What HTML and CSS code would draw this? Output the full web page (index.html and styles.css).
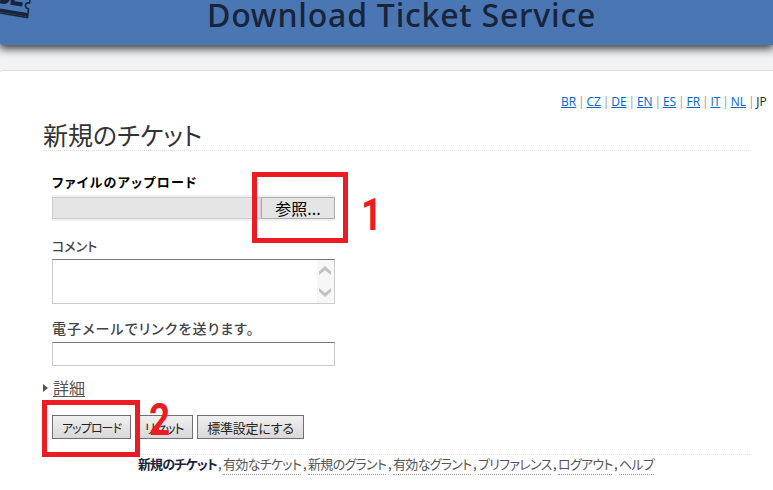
FILE: index.html
```html
<!DOCTYPE html>
<html lang="ja">
<head>
<meta charset="utf-8">
<title>Download Ticket Service</title>
<link rel="stylesheet" href="styles.css">
</head>
<body>
<header class="banner">
  <svg class="logo" width="32" height="20" viewBox="0 0 32 20">
    <g fill="none" stroke="#17243a">
      <path d="M0 13L27.500 17.500L28.500 9Q25 8 25.500 5Q26 2.500 29.500 3L30 0" stroke-width="1.600"/>
      <path d="M0 10.200L27 14.700" stroke-width="3.600"/>
      <path d="M0 1Q6 3.500 8 -1" stroke-width="4"/>
      <path d="M13 -2L12.500 3L22.500 4.500" stroke-width="4"/>
    </g>
  </svg>
  <h1 class="brand">Download Ticket Service</h1>
</header>
<main class="card">
  <nav class="langs"><a>BR</a><i>|</i><a>CZ</a><i>|</i><a>DE</a><i>|</i><a>EN</a><i>|</i><a>ES</a><i>|</i><a>FR</a><i>|</i><a>IT</a><i>|</i><a>NL</a><i>|</i><span>JP</span></nav>
  <h2 class="heading">新規のチケット</h2>
  <form class="form">
    <label class="label label-file">ファイルのアップロード</label>
    <div class="file">
      <div class="file-path"></div>
      <div class="file-browse">参照...</div>
      <div class="mark mark-browse"></div>
      <div class="digit digit-one">1</div>
    </div>
    <label class="label label-comment">コメント</label>
    <div class="field area">
      <div class="scroll">
        <svg width="12" height="9" viewBox="0 0 12 9"><path d="M0 5.500L6 0L12 5.500V9L6 4.300L0 9Z" fill="#c1c1c1"/></svg>
        <svg width="12" height="9" viewBox="0 0 12 9"><path d="M0 0L6 5L12 0V3.500L6 9L0 3.500Z" fill="#c1c1c1"/></svg>
      </div>
    </div>
    <label class="label label-mail">電子メールでリンクを送ります。</label>
    <div class="field line"></div>
    <div class="details"><i class="arrow"></i><span>詳細</span></div>
    <div class="actions">
      <div class="btn btn-upload">アップロード</div>
      <div class="btn btn-reset">リセット</div>
      <div class="btn btn-default">標準設定にする</div>
      <div class="mark mark-upload"></div>
      <div class="digit digit-two">2</div>
    </div>
  </form>
  <footer class="links"><b class="w78">新規のチケット</b><i>,</i><a class="w78">有効なチケット</a><i>,</i><a class="w78">新規のグラント</a><i>,</i><a class="w78">有効なグラント</a><i>,</i><a class="w73">プリファレンス</a><i>,</i><a class="w54">ログアウト</a><i>,</i><a class="w35">ヘルプ</a></footer>
</main>
</body>
</html>
```
FILE: styles.css
```css
* { box-sizing: border-box; }
html, body { height: 100%; overflow: hidden; }
body {
  margin: 0;
  background: #f0f2f4;
  color: #444;
  font-family: "Open Sans", "Noto Sans CJK JP", sans-serif;
  white-space: nowrap;
}
i { font-style: normal; }
.banner {
  position: relative;
  height: 45px;
  padding-left: 207px;
  background: #4b76b4;
  border-bottom-left-radius: 3px;
  box-shadow: 0 3px 8px 1px #444;
}
.logo { position: absolute; left: 0; top: 0; }
.brand {
  margin: 0;
  height: 45px;
  font: 500 32px/30px "Noto Sans", sans-serif;
  letter-spacing: 0.78px;
  color: #17243a;
}
.card {
  margin-top: 25px;
  height: 420px;
  padding: 22px 0 0 43px;
  background: #fff;
  border-top: 1px solid #ddd;
  border-top-left-radius: 3px;
}
.langs {
  display: flex;
  justify-content: space-between;
  width: 206px;
  margin-left: 518px;
  font-size: 12px;
  line-height: 18px;
}
.langs a { color: #06c; text-decoration: underline; }
.langs i { color: #999; }
.langs span { color: #222; }
.heading {
  width: 706px;
  height: 40px;
  margin: 0;
  border-bottom: 1px dotted #ddd;
  color: #333;
  font: 400 25px/46px "Noto Sans CJK JP", sans-serif;
  font-feature-settings: "palt";
}
.form { width: 292px; padding: 21px 0 0 9px; }
.label {
  display: block;
  height: 23px;
  font: 500 13px/19px "Noto Sans CJK JP", sans-serif;
  font-feature-settings: "palt";
}
.label-file { color: #000; font-weight: 700; letter-spacing: 1.3px; }
.label-comment { height: 22px; line-height: 17px; }
.label-mail { height: 23px; font-size: 14px; letter-spacing: 1.1px; }
.file {
  position: relative;
  display: flex;
  width: 283px;
  height: 26px;
  margin-bottom: 16px;
  padding: 2px 0;
  background: #f0f0f0;
}
.file-path { width: 209px; background: #e5e5e5; border: 1px solid #ccc; }
.file-browse {
  width: 74px;
  background: #e5e5e5;
  border: 1px solid #acacac;
  color: #000;
  font: 16px/21px "Noto Sans CJK JP", sans-serif;
  text-align: center;
}
.field {
  width: 283px;
  background: #fff;
  border: 1px solid #ccc;
  border-top-color: #777;
}
.area { display: flex; justify-content: flex-end; height: 45px; margin-bottom: 15px; }
.scroll {
  display: flex;
  flex-direction: column;
  justify-content: space-between;
  align-items: center;
  width: 17px;
  padding: 6px 1px 6px 0;
  background: #f7f7f7;
}
.line { height: 24px; }
.details {
  display: flex;
  align-items: center;
  height: 24px;
  margin: 10px 0 0 -9px;
  color: #555;
  font: 16px/23px "Noto Sans CJK JP", sans-serif;
}
.details span { border-bottom: 1px solid #555; line-height: 17px; }
.arrow {
  width: 5px;
  margin-right: 5px;
  border: solid transparent;
  border-width: 4px 0 4px 5px;
  border-left-color: #554;
}
.actions { position: relative; display: flex; gap: 4px; margin-top: 15px; width: 252px; }
.btn {
  height: 24px;
  border: 1px solid #707070;
  background: linear-gradient(#f0f0f0, #d8d8d8);
  color: #222;
  font: 13px/23px "Noto Sans CJK JP", sans-serif;
  font-feature-settings: "palt";
  text-align: center;
}
.btn-upload { width: 79px; font-size: 12px; letter-spacing: -0.9px; }
.btn-reset { width: 58px; letter-spacing: -1.2px; }
.btn-default { width: 107px; letter-spacing: -0.2px; }
.mark { position: absolute; border: 5px solid #ed1c24; }
.mark-browse { left: 200px; top: -23px; width: 96px; height: 71px; }
.mark-upload { left: -10px; top: -15px; width: 98px; height: 57px; }
.digit {
  position: absolute;
  color: #ed1c24;
  font: 700 45px/45px Roboto, sans-serif;
  transform: scaleX(0.82);
  transform-origin: left;
}
.digit-one { left: 309px; top: -3px; }
.digit-two { left: 97px; top: -18px; }
.links {
  display: flex;
  width: 612px;
  margin: 15px 0 0 95px;
  border-top: 1px dotted #ddd;
  font: 13px/18px "Noto Sans CJK JP", sans-serif;
  font-feature-settings: "palt";
  letter-spacing: -0.7px;
}
.links a { height: 20px; border-bottom: 1px dotted #999; color: #555; }
.links b { color: #17243a; letter-spacing: -0.9px; }
.links i { width: 7px; padding-left: 2px; }
.w78 { width: 78px; }
.w73 { width: 73px; }
.w54 { width: 54px; }
.w35 { width: 35px; }
```
